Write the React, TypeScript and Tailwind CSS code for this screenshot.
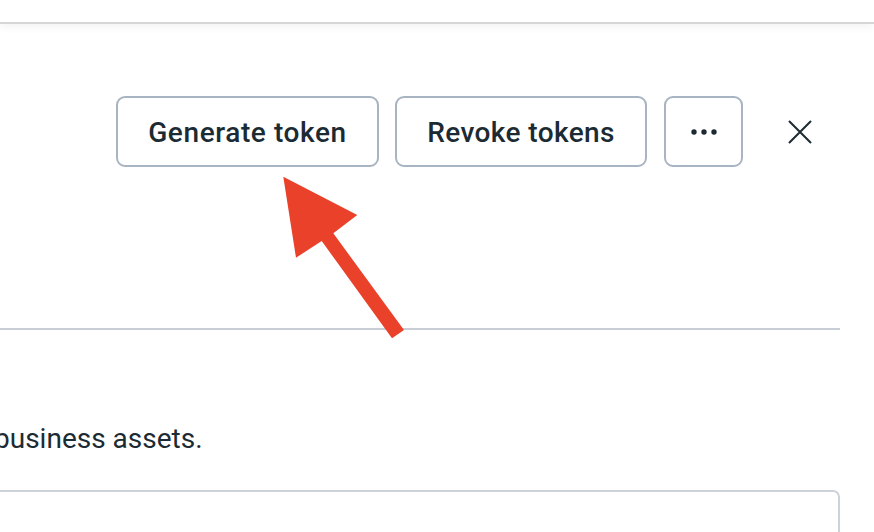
import React from 'react';

const font = { fontFamily: 'Roboto, "Noto Sans", sans-serif' };

const App: React.FC = () => {
  return (
    <div className="relative w-[874px] h-[532px] overflow-hidden bg-white text-[#1c2b33]" style={font}>
      {/* Top bar */}
      <div className="h-[24px] border-b-2 border-[#d6d6d6] shadow-[0_3px_10px_rgba(0,0,0,0.05)]" />

      {/* Actions */}
      <div className="flex items-center mt-[72px] pl-[116px]">
        <button className="w-[263px] h-[71px] pt-[3px] border-2 border-[#a9b4c2] rounded-[9px] text-[28px] font-medium tracking-[0.6px] bg-white">
          Generate token
        </button>
        <button className="ml-[16px] w-[252px] h-[71px] pt-[3px] border-2 border-[#a9b4c2] rounded-[9px] text-[28px] font-medium tracking-[0.4px] bg-white">
          Revoke tokens
        </button>
        <button className="ml-[17px] w-[79px] h-[71px] border-2 border-[#a9b4c2] rounded-[9px] flex items-center justify-center bg-white">
          <svg width="26" height="6" viewBox="0 0 26 6">
            <circle cx="3" cy="3" r="2.7" fill="#1c2b33" />
            <circle cx="13" cy="3" r="2.7" fill="#1c2b33" />
            <circle cx="23" cy="3" r="2.7" fill="#1c2b33" />
          </svg>
        </button>
        <button className="ml-[45px] w-[24px] h-[24px] flex items-center justify-center">
          <svg width="24" height="24" viewBox="0 0 24 24" fill="none" stroke="#1c2b33" strokeWidth="2">
            <path d="M1 1 L23 23 M23 1 L1 23" />
          </svg>
        </button>
      </div>

      {/* Body */}
      <div className="w-[840px] mt-[161px]">
        <div className="h-[2px] bg-[#c9ced6]" />
        <p className="mt-[92px] -ml-[6px] text-[28px] leading-[34px]">business assets.</p>
        <div className="mt-[34px] -ml-[10px] w-[850px] h-[80px] border-2 border-[#cdd2d9] rounded-[7px]" />
      </div>

      {/* Annotation arrow */}
      <svg className="absolute left-0 top-0 pointer-events-none" width="874" height="532" viewBox="0 0 874 532">
        <polygon
          points="283.3,176.7 357.3,215 333.3,233.3 404,330 392,338.3 321.7,241 296,257.7"
          fill="#e9412a"
        />
      </svg>
    </div>
  );
};

export default App;
